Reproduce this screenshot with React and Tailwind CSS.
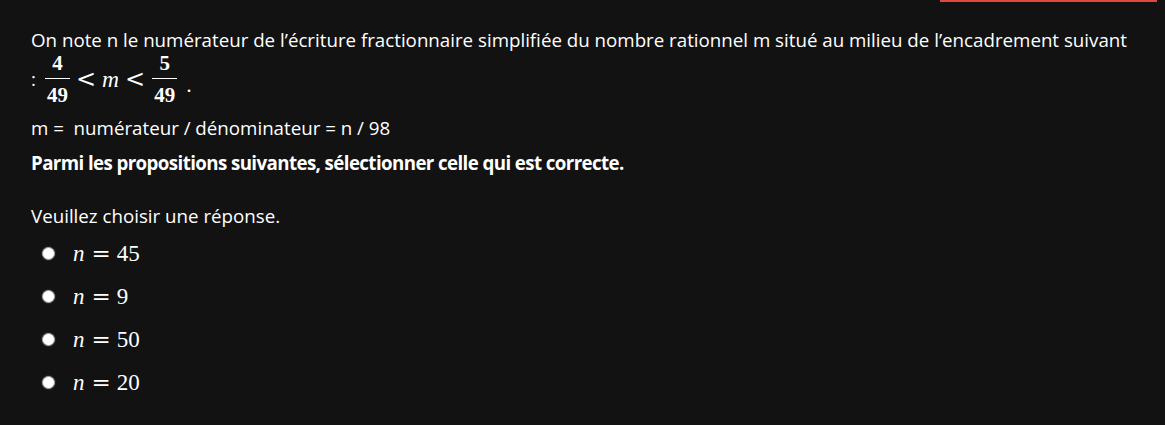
import React from "react";

function Frac({ num, den }) {
  return (
    <span className="inline-flex flex-col items-center font-['Liberation_Serif',serif] font-bold text-[21px] leading-[18px]">
      <span className="px-[2px]">{num}</span>
      <span className="h-[1px] w-full bg-white mt-[6px] mb-[7px]"></span>
      <span className="px-[2px]">{den}</span>
    </span>
  );
}

function Option({ value }) {
  return (
    <div className="flex items-center h-[43px]">
      <span className="w-[13px] h-[13px] rounded-full bg-white border border-[#9a9a9a] ml-[11px] shadow-[0_0_1.5px_#777]"></span>
      <span className="ml-[18px] flex items-baseline font-['Liberation_Serif',serif] text-[23px] text-white">
        <i>n</i>
        <span className="ml-[7px] mr-[6px] font-['DejaVu_Serif',serif] text-[23px]">=</span>
        <span>{value}</span>
      </span>
    </div>
  );
}

export default function App() {
  return (
    <div className="w-[1165px] h-[425px] bg-[#121212] text-white font-['Open_Sans',sans-serif] relative overflow-hidden">
      <div className="absolute top-0 left-[940px] w-[217px] h-[2px] bg-[#e0473f]"></div>
      <div className="pl-[31px] pt-[27px] pr-[10px] text-[18.73px]">
        <p className="leading-[26px] whitespace-nowrap">
          On note n le numérateur de l’écriture fractionnaire simplifiée du nombre rationnel m situé au milieu de l’encadrement suivant
        </p>
        <div className="flex items-center h-[52px]">
          <span className="mr-[9px] leading-[26px]">:</span>
          <Frac num="4" den="49" />
          <span className="font-['DejaVu_Serif',serif] text-[24px] ml-[6px] leading-none">&lt;</span>
          <span className="font-['Liberation_Serif',serif] italic text-[23.5px] ml-[6px] mr-[6px] leading-none translate-y-[1px]">m</span>
          <span className="font-['DejaVu_Serif',serif] text-[24px] mr-[7px] leading-none">&lt;</span>
          <Frac num="5" den="49" />
          <span className="ml-[9px] font-['Liberation_Serif',serif] text-[22px] leading-none translate-y-[6px]">.</span>
        </div>
        <p className="leading-[26px] mt-[10px]">m =&nbsp; numérateur / dénominateur = n / 98</p>
        <p className="leading-[26px] mt-[9px] font-bold tracking-[-0.6px]">
          Parmi les propositions suivantes, sélectionner celle qui est correcte.
        </p>
        <p className="leading-[26px] mt-[27px]">Veuillez choisir une réponse.</p>
        <div className="mt-[3px]">
          <Option value="45" />
          <Option value="9" />
          <Option value="50" />
          <Option value="20" />
        </div>
      </div>
    </div>
  );
}
